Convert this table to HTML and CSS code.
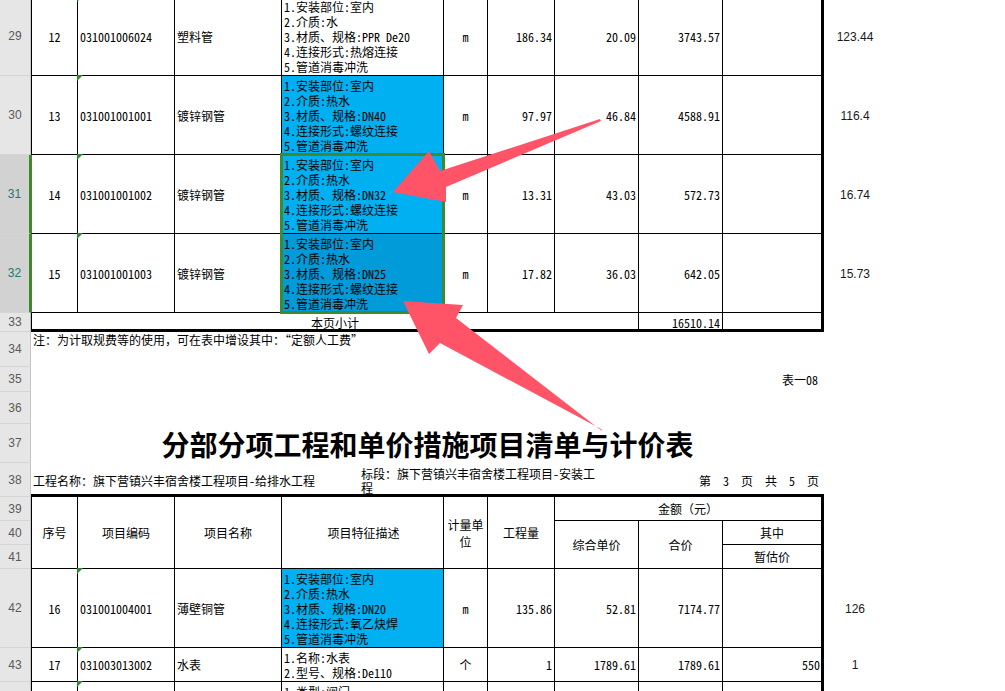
FILE: index.html
```html
<!DOCTYPE html>
<html lang="zh-CN">
<head>
<meta charset="utf-8">
<title>分部分项工程和单价措施项目清单与计价表</title>
<link rel="stylesheet" href="styles.css">
</head>
<body>
<div class="sheet">
  <!-- row 29 -->
  <div class="rh">29</div>
  <div class="c ca ctr">12</div>
  <div class="c cb code tri">031001006024</div>
  <div class="c cc name">塑料管</div>
  <div class="c cd"><div class="d">1.安装部位:室内<br>2.介质:水<br>3.材质、规格:PPR De20<br>4.连接形式:热熔连接<br>5.管道消毒冲洗</div></div>
  <div class="c ce ctr">m</div>
  <div class="c cf num">186.34</div>
  <div class="c cg num">20.09</div>
  <div class="c ch num">3743.57</div>
  <div class="c ci"></div>
  <div class="j">123.44</div>

  <!-- row 30 -->
  <div class="rh">30</div>
  <div class="c ca ctr">13</div>
  <div class="c cb code tri">031001001001</div>
  <div class="c cc name">镀锌钢管</div>
  <div class="c cd blue"><div class="d">1.安装部位:室内<br>2.介质:热水<br>3.材质、规格:DN40<br>4.连接形式:螺纹连接<br>5.管道消毒冲洗</div></div>
  <div class="c ce ctr">m</div>
  <div class="c cf num">97.97</div>
  <div class="c cg num">46.84</div>
  <div class="c ch num">4588.91</div>
  <div class="c ci"></div>
  <div class="j">116.4</div>

  <!-- row 31 -->
  <div class="rh sel">31</div>
  <div class="c ca ctr sel">14</div>
  <div class="c cb code tri">031001001002</div>
  <div class="c cc name">镀锌钢管</div>
  <div class="c cd blue"><div class="selbox"></div><div class="d">1.安装部位:室内<br>2.介质:热水<br>3.材质、规格:DN32<br>4.连接形式:螺纹连接<br>5.管道消毒冲洗</div></div>
  <div class="c ce ctr">m</div>
  <div class="c cf num">13.31</div>
  <div class="c cg num">43.03</div>
  <div class="c ch num">572.73</div>
  <div class="c ci"></div>
  <div class="j">16.74</div>

  <!-- row 32 -->
  <div class="rh sel">32</div>
  <div class="c ca ctr sel">15</div>
  <div class="c cb code tri">031001001003</div>
  <div class="c cc name">镀锌钢管</div>
  <div class="c cd blue-sel"><div class="d">1.安装部位:室内<br>2.介质:热水<br>3.材质、规格:DN25<br>4.连接形式:螺纹连接<br>5.管道消毒冲洗</div></div>
  <div class="c ce ctr">m</div>
  <div class="c cf num">17.82</div>
  <div class="c cg num">36.03</div>
  <div class="c ch num">642.05</div>
  <div class="c ci"></div>
  <div class="j">15.73</div>

  <!-- row 33 -->
  <div class="rh">33</div>
  <div class="c ca span-ag ctr thick sub">本页小计</div>
  <div class="c ch num thick sub">16510.14</div>
  <div class="c ci thick"></div>

  <!-- row 34 -->
  <div class="rh">34</div>
  <div class="note">注：为计取规费等的使用，可在表中增设其中：“定额人工费”</div>

  <!-- row 35 -->
  <div class="rh">35</div>
  <div class="tabno">表一08</div>

  <!-- row 36 -->
  <div class="rh">36</div>
  <div class="blank"></div>

  <!-- row 37 -->
  <div class="rh">37</div>
  <div class="title">分部分项工程和单价措施项目清单与计价表</div>

  <!-- row 38 -->
  <div class="rh">38</div>
  <div class="info">
    <div class="pn">工程名称：旗下营镇兴丰宿舍楼工程项目-给排水工程</div>
    <div class="bd">标段：旗下营镇兴丰宿舍楼工程项目-安装工<br>程</div>
    <div class="pg">第  3  页  共  5  页</div>
  </div>

  <!-- rows 39-41 header -->
  <div class="rh">39</div>
  <div class="c ca hd rs3">序号</div>
  <div class="c cb hd rs3">项目编码</div>
  <div class="c cc hd rs3">项目名称</div>
  <div class="c cd hd rs3">项目特征描述</div>
  <div class="c ce hd rs3 unit">计量单<br>位</div>
  <div class="c cf hd rs3">工程量</div>
  <div class="c cg span-gi hd">金额（元）</div>

  <div class="rh">40</div>
  <div class="c cg hd rs2">综合单价</div>
  <div class="c ch hd rs2">合价</div>
  <div class="c ci hd">其中</div>

  <div class="rh">41</div>
  <div class="c ci hd">暂估价</div>

  <!-- row 42 -->
  <div class="rh">42</div>
  <div class="c ca ctr">16</div>
  <div class="c cb code tri">031001004001</div>
  <div class="c cc name">薄壁铜管</div>
  <div class="c cd blue"><div class="d">1.安装部位:室内<br>2.介质:热水<br>3.材质、规格:DN20<br>4.连接形式:氧乙炔焊<br>5.管道消毒冲洗</div></div>
  <div class="c ce ctr">m</div>
  <div class="c cf num">135.86</div>
  <div class="c cg num">52.81</div>
  <div class="c ch num">7174.77</div>
  <div class="c ci"></div>
  <div class="j">126</div>

  <!-- row 43 -->
  <div class="rh">43</div>
  <div class="c ca ctr">17</div>
  <div class="c cb code tri">031003013002</div>
  <div class="c cc name">水表</div>
  <div class="c cd"><div class="d">1.名称:水表<br>2.型号、规格:De110</div></div>
  <div class="c ce ctr">个</div>
  <div class="c cf num">1</div>
  <div class="c cg num">1789.61</div>
  <div class="c ch num">1789.61</div>
  <div class="c ci num tight">550</div>
  <div class="j">1</div>

  <!-- row 44 -->
  <div class="rh">44</div>
  <div class="c ca ctr"></div>
  <div class="c cb code tri"></div>
  <div class="c cc name"></div>
  <div class="c cd top"><div class="d">1.类型:阀门</div></div>
  <div class="c ce"></div>
  <div class="c cf"></div>
  <div class="c cg"></div>
  <div class="c ch"></div>
  <div class="c ci"></div>
</div>

<svg class="arrows" width="1005" height="691" viewBox="0 0 1005 691" aria-hidden="true">
  <polygon points="600,119 601,121 446,187 446,202 393,192 429,151 440,171" fill="#ff5468"/>
  <polygon points="403,301 463,305 456,318 602,431 601,429 440,343 429,354" fill="#ff5468"/>
</svg>
</body>
</html>
```

FILE: styles.css
```css
html, body {
  margin: 0;
  padding: 0;
  background: #fff;
}

body {
  width: 1005px;
  height: 691px;
  overflow: hidden;
  position: relative;
  font-family: "Noto Sans Mono CJK SC", "Noto Sans CJK SC", monospace;
  font-size: 12px;
  color: #000;
}

.sheet {
  display: grid;
  grid-template-columns: 31px 47px 97px 107px 162px 44px 67px 84px 84px 101px 62px 1fr;
  grid-template-rows: 79px 79px 79px 79px 19px 35px 25px 32px 39px 34px 24px 24px 24px 79px 34px 79px;
  margin-top: -3px;
}

/* row headers */
.rh {
  grid-column: 1;
  box-sizing: border-box;
  background: #e6e6e6;
  border-right: 1px solid #c4c4c4;
  border-bottom: 1px solid #d5d5d5;
  color: #5a5a5a;
  font-family: "Liberation Sans", Arial, sans-serif;
  font-size: 12px;
  display: flex;
  align-items: center;
  justify-content: center;
}

.rh.sel {
  background: #d2d2d2;
  color: #217a6e;
  border-right: 2px solid #3f8a2f;
}

/* cells */
.c {
  box-sizing: border-box;
  border-right: 1px solid #000;
  border-bottom: 1px solid #000;
  display: flex;
  align-items: center;
  position: relative;
  min-width: 0;
  white-space: nowrap;
}

.ca { grid-column: 2; border-left: 1px solid #000; }
.ca.sel { border-left-color: #3f8a2f; }
.cb { grid-column: 3; }
.cc { grid-column: 4; }
.cd { grid-column: 5; padding-left: 2px; }
.ce { grid-column: 6; }
.cf { grid-column: 7; }
.cg { grid-column: 8; }
.ch { grid-column: 9; }
.ci { grid-column: 10; border-right: 3px solid #000; }

.span-ag { grid-column: 2 / 9; }
.span-gi { grid-column: 8 / 11; border-right: 3px solid #000; }

.rs3 { grid-row-end: span 3; }
.rs2 { grid-row-end: span 2; }

.ctr { justify-content: center; }
.num { justify-content: flex-end; padding-right: 2px; }
.num.tight { padding-right: 1px; }
.code { padding-left: 2px; }
.name { padding-left: 2px; }

.d {
  line-height: 15px;
}

.top { align-items: flex-start; padding-top: 2px; }

.blue { background: #00b0f0; }
.blue-sel { background: #009bd8; }

.thick { border-bottom: 3px solid #000; }
.sub { padding-top: 3px; }

.hd {
  justify-content: center;
  text-align: center;
}

.unit { line-height: 17px; }

/* green "number stored as text" markers */
.tri::before {
  content: "";
  position: absolute;
  top: -1px;
  left: -1px;
  border-top: 6px solid #2b8c2b;
  border-right: 6px solid transparent;
}

/* extra column values */
.j {
  grid-column: 11;
  display: flex;
  align-items: center;
  justify-content: center;
  font-family: "Liberation Sans", Arial, sans-serif;
  font-size: 12px;
  color: #1a1a1a;
}

/* free text rows */
.note {
  grid-column: 2 / 12;
  padding-left: 2px;
  line-height: 16px;
  white-space: nowrap;
}

.tabno {
  grid-column: 2 / 11;
  display: flex;
  align-items: center;
  justify-content: flex-end;
  padding-right: 6px;
}

.blank { grid-column: 2 / 11; }

.title {
  grid-column: 2 / 11;
  display: flex;
  align-items: center;
  justify-content: center;
  font-family: "Noto Sans CJK SC", sans-serif;
  font-size: 28px;
  font-weight: 700;
  line-height: 1;
}

.info {
  grid-column: 2 / 11;
  box-sizing: border-box;
  border-bottom: 3px solid #000;
  display: flex;
  padding: 0 5px 0 2px;
  line-height: 14px;
}

.pn {
  width: 328px;
  flex: none;
  align-self: flex-end;
  margin-bottom: 6px;
  white-space: nowrap;
}

.bd {
  width: 236px;
  flex: none;
  align-self: flex-start;
  margin-top: 4px;
  white-space: nowrap;
}

.pg {
  flex: 1;
  align-self: flex-end;
  margin-bottom: 6px;
  text-align: right;
  white-space: pre;
}

/* selection outline over D31:D32 (overlay) */
.selbox {
  position: absolute;
  left: -2px;
  top: -2px;
  width: 165px;
  height: 161px;
  box-sizing: border-box;
  border: 3px solid #3f8a2f;
  z-index: 3;
  pointer-events: none;
}

.arrows {
  position: absolute;
  top: 0;
  left: 0;
  z-index: 5;
  pointer-events: none;
}
```
